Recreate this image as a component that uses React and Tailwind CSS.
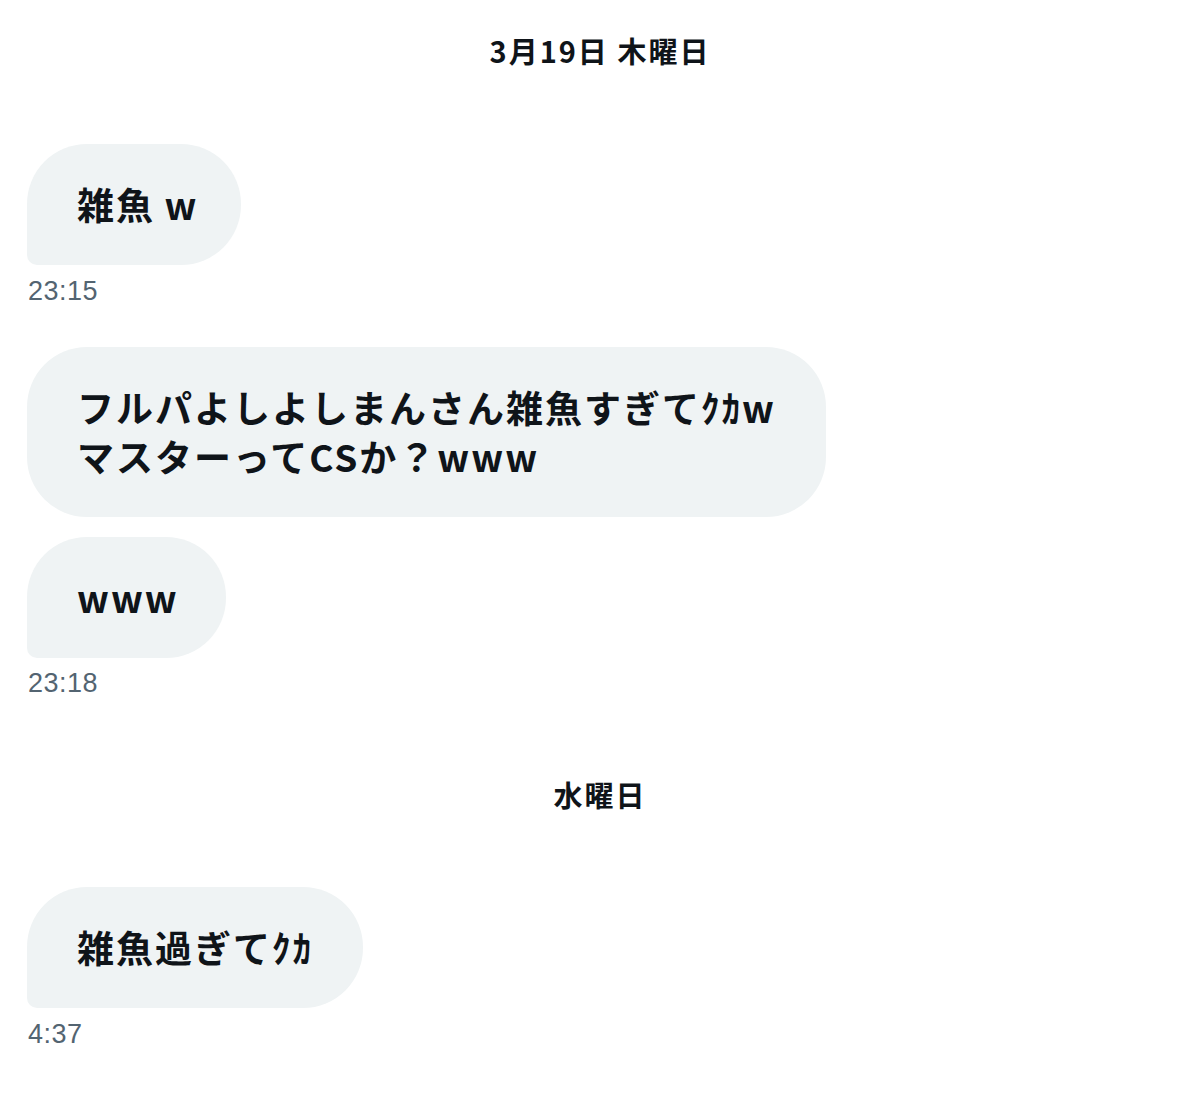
export default function App() {
  const font = { fontFamily: '"Noto Sans CJK JP", "Noto Sans", sans-serif' };
  const bubble =
    "bg-[#eff3f4] text-[#0f1419] text-[37px] leading-[49px] font-semibold pl-[50px] py-[36px] tracking-[2px]";
  const ts =
    "text-[#536471] text-[27px] leading-[30px] pl-[28px] font-['Liberation_Sans',sans-serif] tracking-[0.5px]";
  return (
    <div className="w-[1200px] h-[1112px] bg-white flex flex-col" style={font}>
      <div className="h-[100px] flex items-center justify-center">
        <span className="text-[29px] font-bold text-[#0f1419] leading-[40px] tracking-[2px]">3月19日 木曜日</span>
      </div>
      <div className="pl-[27px] mt-[44px]">
        <div className={bubble + " w-[214px] rounded-[60px] rounded-bl-[10px]"}>雑魚{"\u2009"}w</div>
      </div>
      <div className={ts + " mt-[11px]"}>23:15</div>
      <div className="pl-[27px] mt-[41px]">
        <div className={bubble + " w-[799px] rounded-[60px]"}>
          フルパよしよしまんさん雑魚すぎてｸｶw
          <br />
          マスターってCSか？www
        </div>
      </div>
      <div className="pl-[27px] mt-[20px]">
        <div className={bubble + " w-[199px] rounded-[60px] rounded-bl-[10px]"}>www</div>
      </div>
      <div className={ts + " mt-[10px]"}>23:18</div>
      <div className="mt-[76px] flex justify-center">
        <span className="text-[29px] font-bold text-[#0f1419] leading-[40px] tracking-[2px]">水曜日</span>
      </div>
      <div className="pl-[27px] mt-[73px]">
        <div className={bubble + " w-[336px] rounded-[60px] rounded-bl-[10px]"}>雑魚過ぎてｸｶ</div>
      </div>
      <div className={ts + " mt-[11px]"}>4:37</div>
    </div>
  );
}
